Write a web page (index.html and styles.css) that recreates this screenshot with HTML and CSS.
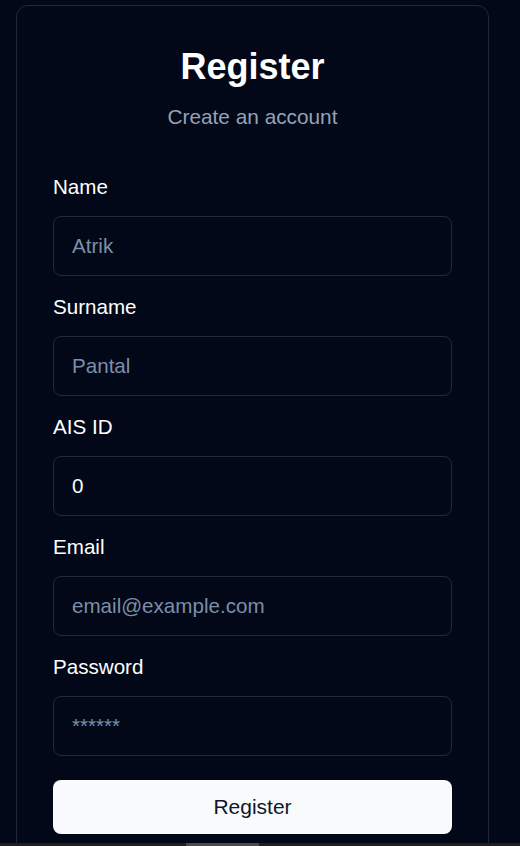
FILE: index.html
```html
<!DOCTYPE html>
<html lang="en">
<head>
<meta charset="utf-8">
<title>Register</title>
<link rel="stylesheet" href="styles.css">
</head>
<body>
<main class="page">
  <form class="card">
    <header class="card-head">
      <h1 class="title">Register</h1>
      <p class="subtitle">Create an account</p>
    </header>
    <div class="fields">
      <div class="field">
        <label class="label" for="name">Name</label>
        <input class="input" id="name" type="text" placeholder="Atrik">
      </div>
      <div class="field">
        <label class="label" for="surname">Surname</label>
        <input class="input" id="surname" type="text" placeholder="Pantal">
      </div>
      <div class="field">
        <label class="label" for="ais">AIS ID</label>
        <input class="input" id="ais" type="text" value="0">
      </div>
      <div class="field">
        <label class="label" for="email">Email</label>
        <input class="input" id="email" type="text" placeholder="email@example.com">
      </div>
      <div class="field">
        <label class="label" for="password">Password</label>
        <input class="input" id="password" type="text" placeholder="******">
      </div>
    </div>
    <button class="button" type="button">Register</button>
  </form>
</main>
<div class="hscroll"><div class="hscroll-thumb"></div></div>
</body>
</html>
```

FILE: styles.css
```css
* { box-sizing: border-box; }
html, body {
  margin: 0;
  padding: 0;
  background: #020817;
  font-family: "Liberation Sans", Arial, sans-serif;
  color: #f8fafc;
  overflow: hidden;
  height: 846px;
}
.page {
  padding: 5px 31px 0 16px;
}
.card {
  border: 1px solid #1e293b;
  border-radius: 12px;
  padding: 41px 36px 40px 36px;
  display: flex;
  flex-direction: column;
  width: 473px;
}
.card-head {
  display: flex;
  flex-direction: column;
  align-items: center;
  gap: 16px;
  margin-bottom: 42px;
}
.title {
  margin: 0;
  font-size: 36px;
  line-height: 40px;
  font-weight: 700;
  color: #ffffff;
}
.subtitle {
  margin: 0;
  font-size: 20.8px;
  line-height: 28px;
  color: #94a3b8;
}
.fields {
  display: flex;
  flex-direction: column;
  gap: 17px;
}
.field {
  display: flex;
  flex-direction: column;
  gap: 15px;
}
.label {
  font-size: 20.6px;
  line-height: 28px;
  color: #ffffff;
}
.input {
  height: 60px;
  width: 100%;
  border: 1px solid #1e293b;
  border-radius: 8px;
  background: #020817;
  color: #f8fafc;
  font-family: "Liberation Sans", Arial, sans-serif;
  font-size: 20.6px;
  padding: 0 18px;
  outline: none;
}
.input::placeholder {
  color: #7c8fa9;
  opacity: 1;
}
.button {
  margin-top: 24px;
  height: 54px;
  width: 100%;
  border: 0;
  border-radius: 8px;
  background: #f8fafc;
  color: #0f172a;
  font-family: "Liberation Sans", Arial, sans-serif;
  font-size: 21px;
}
.hscroll {
  position: fixed;
  left: 0;
  right: 0;
  bottom: 0;
  height: 3px;
  background: #1f1f1f;
}
.hscroll-thumb {
  position: absolute;
  left: 186px;
  width: 73px;
  top: 0;
  bottom: 0;
  background: #4a4a4a;
}
```
